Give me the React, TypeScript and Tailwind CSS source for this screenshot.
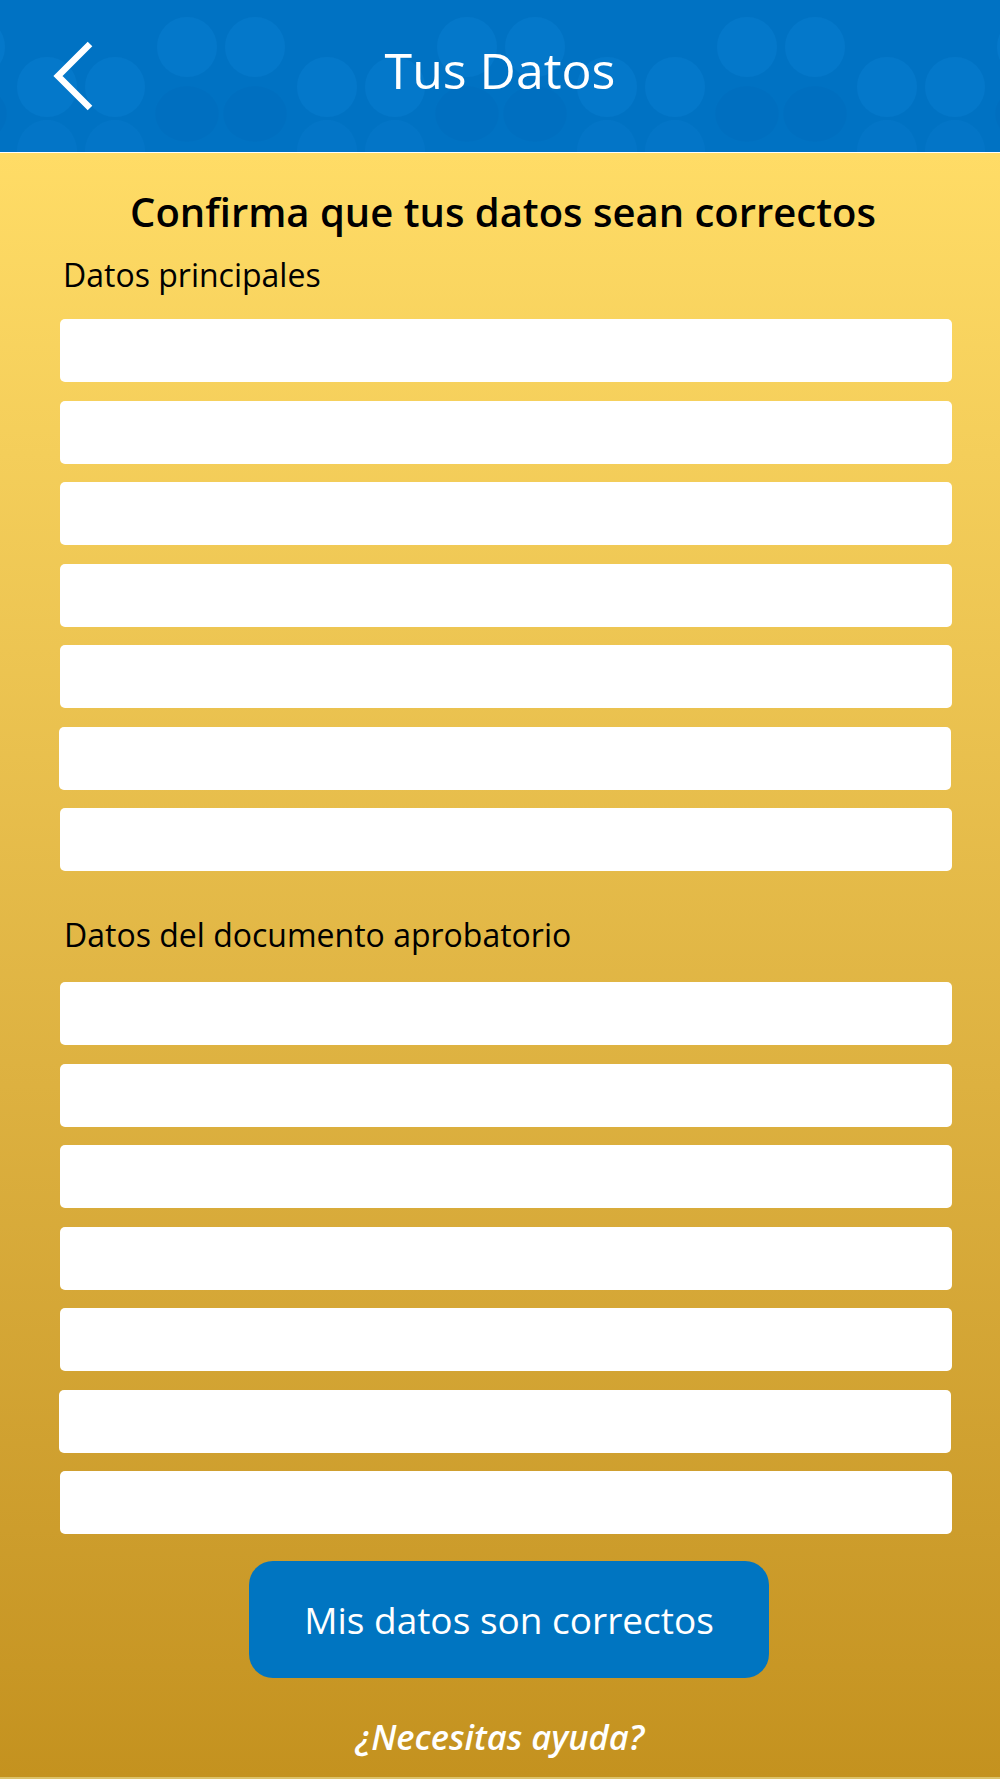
import React from 'react';

const FONT = { fontFamily: '"Open Sans", "Noto Sans", sans-serif' };

const principales = ['nombre', 'apellidoPaterno', 'apellidoMaterno', 'fechaNacimiento', 'curp', 'correo', 'telefono'];
const documento = ['tipo', 'folio', 'fechaEmision', 'vigencia', 'entidad', 'clave', 'observaciones'];

// faint crowd of heads behind the header title
const CrowdPattern: React.FC = () => (
  <svg className="absolute inset-0 h-full w-full" viewBox="0 0 1000 152" preserveAspectRatio="none" aria-hidden="true">
    <defs>
      <pattern id="crowd" x="17" y="0" width="280" height="152" patternUnits="userSpaceOnUse">
        <ellipse cx="30" cy="152" rx="30" ry="32" fill="#0a7fd2" opacity="0.25" />
        <ellipse cx="98" cy="152" rx="30" ry="32" fill="#0a7fd2" opacity="0.25" />
        <ellipse cx="170" cy="114" rx="32" ry="28" fill="#0068b6" opacity="0.25" />
        <ellipse cx="238" cy="114" rx="32" ry="28" fill="#0068b6" opacity="0.25" />
        <circle cx="170" cy="47" r="30" fill="#0a80d4" opacity="0.38" />
        <circle cx="238" cy="47" r="30" fill="#0a80d4" opacity="0.38" />
        <circle cx="30" cy="87" r="30" fill="#0a80d4" opacity="0.38" />
        <circle cx="98" cy="87" r="30" fill="#0a80d4" opacity="0.38" />
      </pattern>
    </defs>
    <rect width="1000" height="152" fill="url(#crowd)" />
  </svg>
);

const Field: React.FC<{ name: string; shift?: boolean }> = ({ name, shift }) => (
  <input
    name={name}
    type="text"
    className={`block h-[63px] w-full rounded-[5px] bg-white outline-none ${shift ? '-ml-[1px]' : ''}`}
  />
);

export default function App() {
  return (
    <div className="flex min-h-screen flex-col" style={FONT}>
      <header className="relative h-[153px] shrink-0 overflow-hidden border-b border-white bg-[#0072c3]">
        <CrowdPattern />
        <div className="relative grid h-[152px] grid-cols-[1fr_auto_1fr] items-center">
          <button className="ml-[50px] flex h-[72px] w-[46px] items-center justify-start" aria-label="Regresar">
            <svg width="46" height="72" viewBox="0 0 46 72" fill="none">
              <polyline points="40,4 8,36 40,68" stroke="#ffffff" strokeWidth="6.5" strokeLinecap="butt" strokeLinejoin="miter" />
            </svg>
          </button>
          <h1 className="-mt-[12px] text-[50px] leading-none text-white">Tus Datos</h1>
          <div />
        </div>
      </header>

      <main className="flex flex-1 flex-col border-b-2 border-[#dcc268] bg-gradient-to-b from-[#ffdc66] to-[#c4921f] pt-[32px] pb-[16px]">
        <h2 className="pl-[6px] text-center text-[40px] font-semibold leading-[54px] text-black">
          Confirma que tus datos sean correctos
        </h2>

        <section className="pl-[60px] pr-[48px]">
          <p className="mt-[16px] pl-[3px] text-[32px] leading-[40px] text-black">Datos principales</p>
          <div className="mt-[24px] flex flex-col gap-[18.5px]">
            {principales.map((f, i) => (
              <Field key={f} name={f} shift={i === 5} />
            ))}
          </div>

          <p className="mt-[44px] pl-[4px] text-[32px] leading-[40px] text-black">Datos del documento aprobatorio</p>
          <div className="mt-[27px] flex flex-col gap-[18.5px]">
            {documento.map((f, i) => (
              <Field key={f} name={f} shift={i === 5} />
            ))}
          </div>
        </section>

        <div className="mt-[27px] pl-[249px]">
          <button className="flex h-[117px] w-[520px] items-center justify-center rounded-[24px] bg-[#0075c1] text-[37px] text-white">
            Mis datos son correctos
          </button>
        </div>

        <a href="#" className="mt-[39px] block text-center text-[34.5px] font-semibold italic leading-[40px] text-white">
          ¿Necesitas ayuda?
        </a>
      </main>
    </div>
  );
}
